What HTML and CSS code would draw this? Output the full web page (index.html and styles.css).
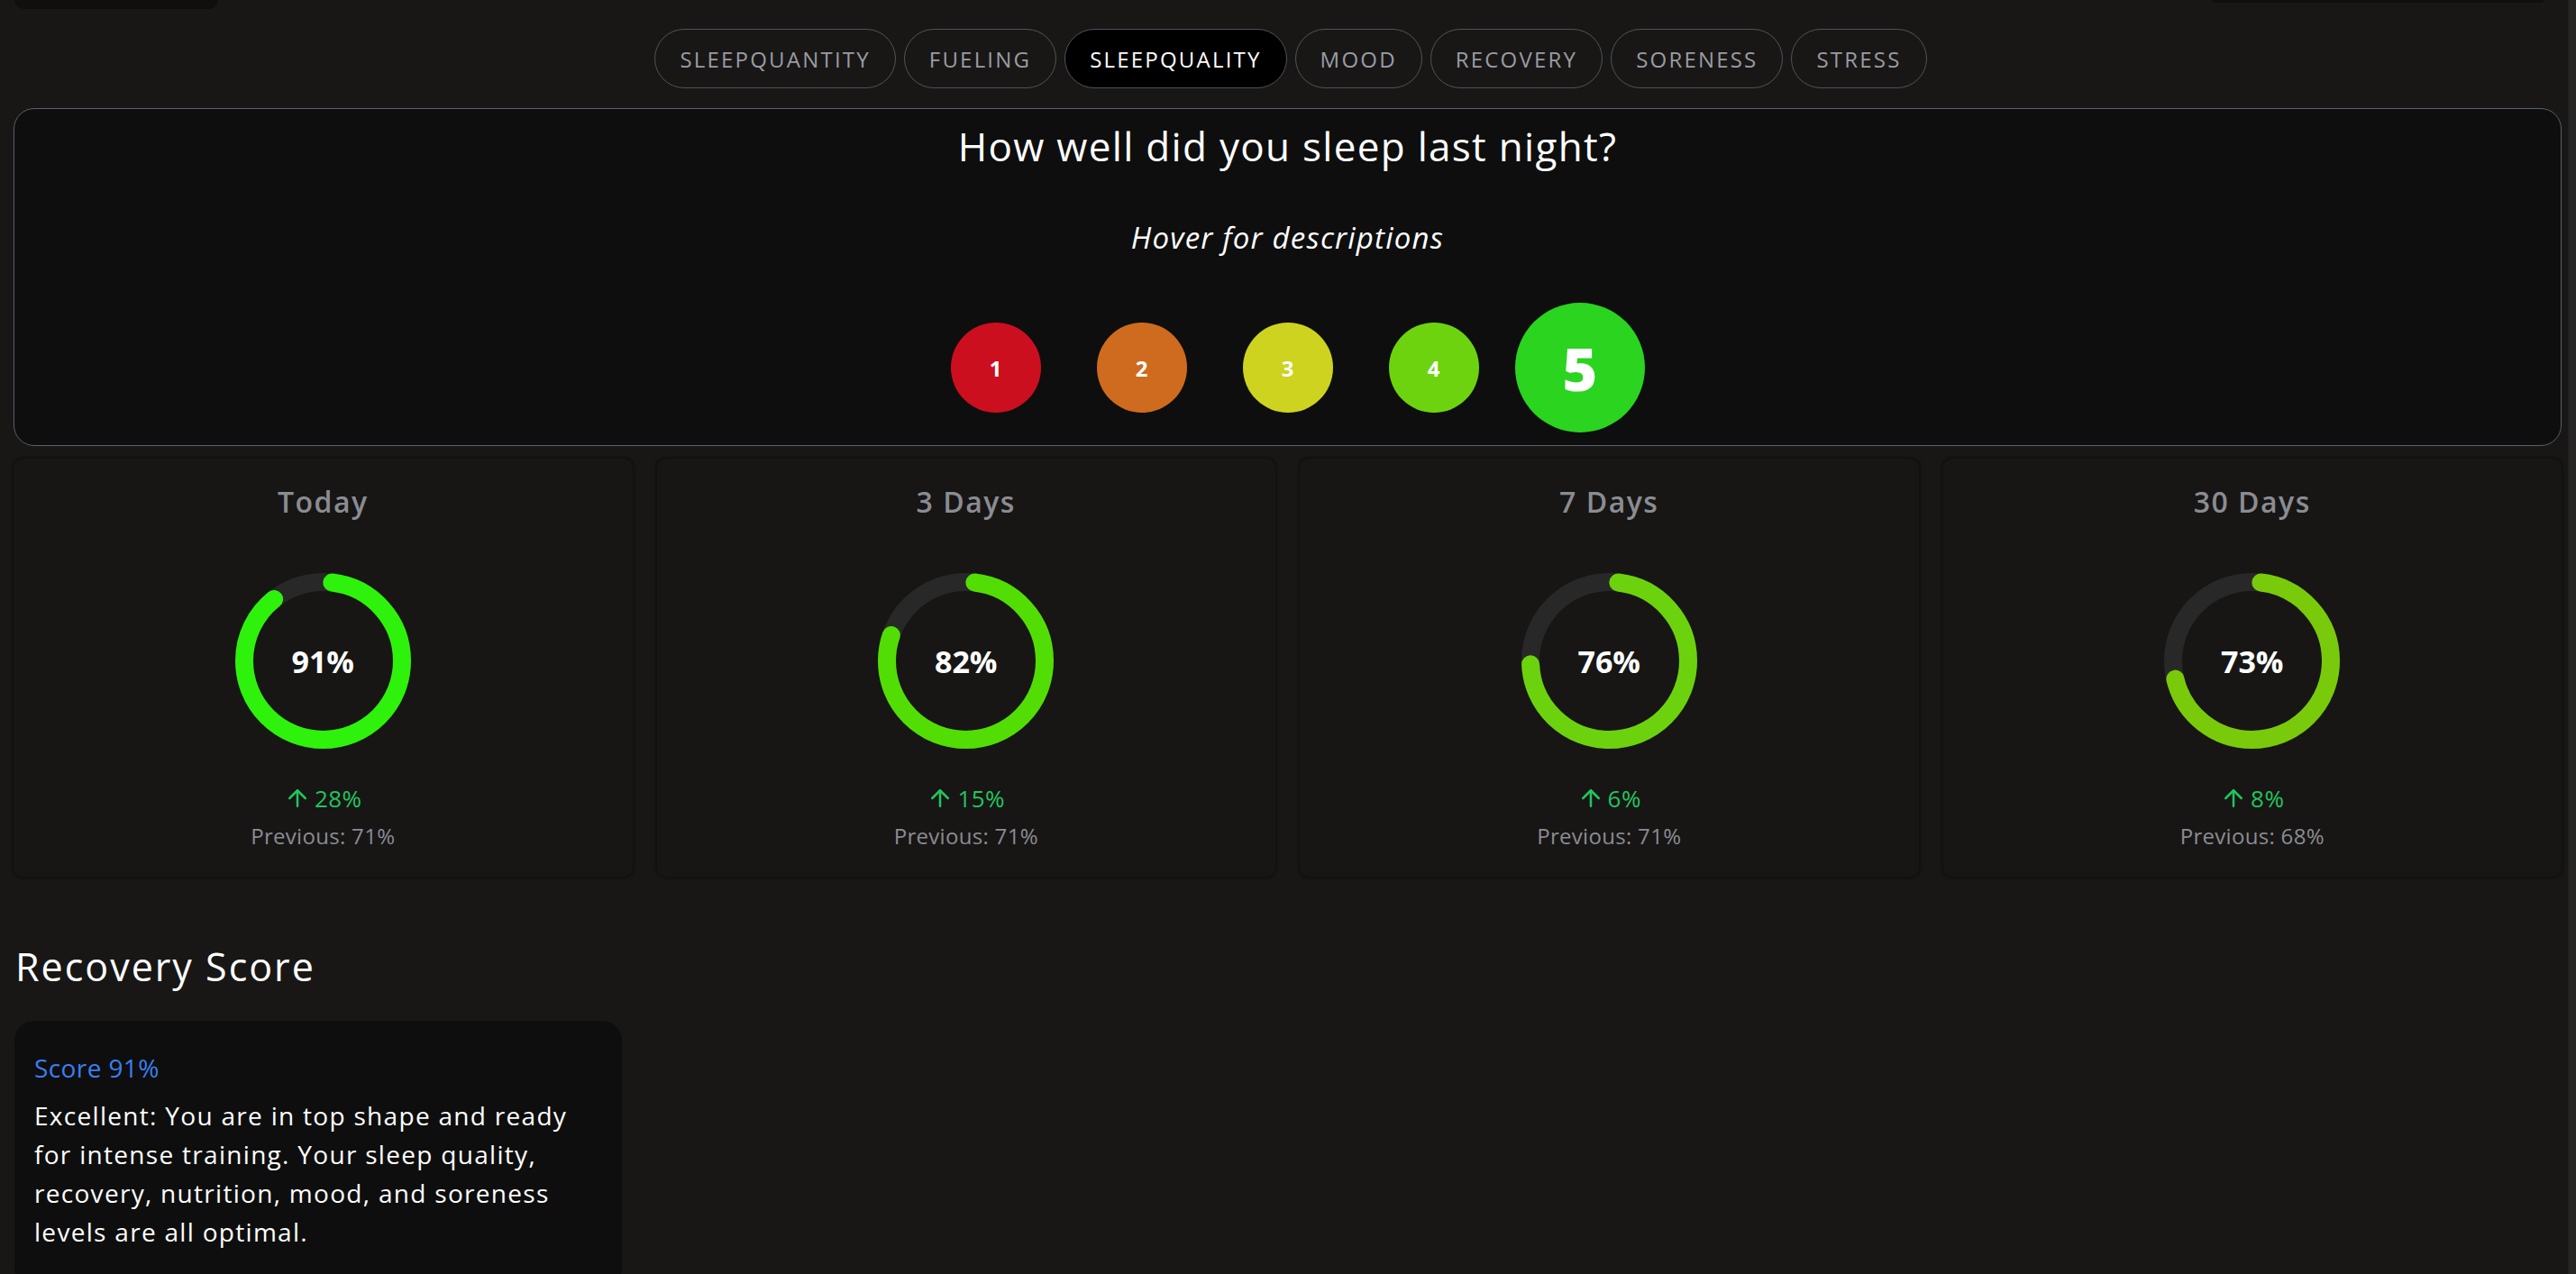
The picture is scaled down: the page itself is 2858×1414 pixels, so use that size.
FILE: index.html
```html
<!DOCTYPE html>
<html lang="en">
<head>
    <meta charset="UTF-8">
    <meta name="viewport" content="width=device-width, initial-scale=1.0">
    <title>Sleep Quality</title>
    <link rel="stylesheet" href="styles.css">
</head>
<body>
    <div class="page">
        <div class="top">
            <div class="top-left"></div>
            <div class="top-right"></div>
        </div>

        <nav class="tabs">
            <button class="tab">SLEEPQUANTITY</button>
            <button class="tab">FUELING</button>
            <button class="tab active">SLEEPQUALITY</button>
            <button class="tab">MOOD</button>
            <button class="tab">RECOVERY</button>
            <button class="tab">SORENESS</button>
            <button class="tab">STRESS</button>
        </nav>

        <section class="question">
            <h2 class="question-title">How well did you sleep last night?</h2>
            <p class="question-hint">Hover for descriptions</p>
            <div class="ratings">
                <button class="rating r1">1</button>
                <button class="rating r2">2</button>
                <button class="rating r3">3</button>
                <button class="rating r4">4</button>
                <button class="rating r5 selected">5</button>
            </div>
        </section>

        <div class="stats">
            <div class="stat">
                <h3 class="stat-title">Today</h3>
                <div class="ring">
                    <svg viewBox="0 0 195 195" width="195" height="195">
                        <circle class="track" cx="97.5" cy="97.5" r="87.5"></circle>
                        <circle class="bar" cx="97.5" cy="97.5" r="87.5" stroke="#2ef20b" stroke-dasharray="480.3 600" stroke-dashoffset="-10" transform="rotate(-90 97.5 97.5)"></circle>
                    </svg>
                    <span class="ring-value">91%</span>
                </div>
                <div class="change">
                    <svg viewBox="0 0 24 24" width="30" height="30"><path d="M12 19V5"/><path d="m5 12 7-7 7 7"/></svg>
                    <span>28%</span>
                </div>
                <div class="previous">Previous: 71%</div>
            </div>
            <div class="stat">
                <h3 class="stat-title">3 Days</h3>
                <div class="ring">
                    <svg viewBox="0 0 195 195" width="195" height="195">
                        <circle class="track" cx="97.5" cy="97.5" r="87.5"></circle>
                        <circle class="bar" cx="97.5" cy="97.5" r="87.5" stroke="#52de05" stroke-dasharray="430.8 600" stroke-dashoffset="-10" transform="rotate(-90 97.5 97.5)"></circle>
                    </svg>
                    <span class="ring-value">82%</span>
                </div>
                <div class="change">
                    <svg viewBox="0 0 24 24" width="30" height="30"><path d="M12 19V5"/><path d="m5 12 7-7 7 7"/></svg>
                    <span>15%</span>
                </div>
                <div class="previous">Previous: 71%</div>
            </div>
            <div class="stat">
                <h3 class="stat-title">7 Days</h3>
                <div class="ring">
                    <svg viewBox="0 0 195 195" width="195" height="195">
                        <circle class="track" cx="97.5" cy="97.5" r="87.5"></circle>
                        <circle class="bar" cx="97.5" cy="97.5" r="87.5" stroke="#6cd20e" stroke-dasharray="397.8 600" stroke-dashoffset="-10" transform="rotate(-90 97.5 97.5)"></circle>
                    </svg>
                    <span class="ring-value">76%</span>
                </div>
                <div class="change">
                    <svg viewBox="0 0 24 24" width="30" height="30"><path d="M12 19V5"/><path d="m5 12 7-7 7 7"/></svg>
                    <span>6%</span>
                </div>
                <div class="previous">Previous: 71%</div>
            </div>
            <div class="stat">
                <h3 class="stat-title">30 Days</h3>
                <div class="ring">
                    <svg viewBox="0 0 195 195" width="195" height="195">
                        <circle class="track" cx="97.5" cy="97.5" r="87.5"></circle>
                        <circle class="bar" cx="97.5" cy="97.5" r="87.5" stroke="#79ca0b" stroke-dasharray="381.3 600" stroke-dashoffset="-10" transform="rotate(-90 97.5 97.5)"></circle>
                    </svg>
                    <span class="ring-value">73%</span>
                </div>
                <div class="change">
                    <svg viewBox="0 0 24 24" width="30" height="30"><path d="M12 19V5"/><path d="m5 12 7-7 7 7"/></svg>
                    <span>8%</span>
                </div>
                <div class="previous">Previous: 68%</div>
            </div>
        </div>

        <h2 class="recovery-title">Recovery Score</h2>
        <div class="recovery">
            <div class="recovery-score">Score 91%</div>
            <p class="recovery-text">Excellent: You are in top shape and ready for intense training. Your sleep quality, recovery, nutrition, mood, and soreness levels are all optimal.</p>
        </div>
    </div>
    <div class="scrollbar"></div>
</body>
</html>
```

FILE: styles.css
```css
html, body {
    height: 100%;
    overflow: hidden;
}
body {
    margin: 0;
    display: flex;
    background-color: #181716;
    color: #ffffff;
    font-family: "Open Sans", "Noto Sans", sans-serif;
}
.page {
    flex: 1;
    padding: 0 7px 0 15px;
}
.scrollbar {
    width: 8px;
    height: 100%;
    background-color: #272727;
    border-left: 1px solid #1f1f1f;
}

/* header remains */
.top {
    display: flex;
    justify-content: space-between;
    align-items: flex-start;
    padding-right: 20px;
}
.top-left {
    width: 226px;
    height: 10px;
    margin-left: 1px;
    background-color: #0f0f0f;
    border-radius: 0 0 10px 10px;
}
.top-right {
    width: 368px;
    height: 3px;
    background-color: #0f0f0f;
    border-radius: 0 0 6px 6px;
}

/* tabs */
.tabs {
    display: flex;
    justify-content: center;
    gap: 9px;
    margin-top: 22px;
    padding-left: 7px;
}
.tab {
    height: 66px;
    padding: 0 27px;
    border: 1px solid #4f535c;
    border-radius: 33px;
    background-color: transparent;
    color: #9a9ca3;
    font-family: inherit;
    font-size: 24px;
    letter-spacing: 2.2px;
    cursor: pointer;
}
.tab.active {
    background-color: #000000;
    color: #ffffff;
}

/* question panel */
.question {
    margin-top: 22px;
    padding: 11px 0 36px;
    border: 1px solid #5a5f6a;
    border-radius: 23px;
    background-color: #0e0e0e;
    text-align: center;
}
.question-title {
    margin: 0;
    font-size: 44px;
    font-weight: 500;
    letter-spacing: 1.3px;
    line-height: 60px;
}
.question-hint {
    margin: 50px 0 0;
    font-size: 33px;
    font-style: italic;
    font-weight: 400;
    letter-spacing: 1.2px;
    line-height: 44px;
}
.ratings {
    display: flex;
    justify-content: center;
    margin-top: 72px;
}
.rating {
    width: 100px;
    height: 100px;
    margin: 0 31px;
    border: none;
    border-radius: 50%;
    color: #ffffff;
    font-family: inherit;
    font-size: 24px;
    font-weight: 700;
    cursor: pointer;
}
.r1 { background-color: #cc0f1f; }
.r2 { background-color: #cf6b1e; }
.r3 { background-color: #ced31f; }
.r4 { background-color: #6dd30f; }
.r5 { background-color: #2bd41f; }
.rating.selected {
    transform: scale(1.44);
    font-size: 46px;
    font-weight: 800;
}

/* stat cards */
.stats {
    display: grid;
    grid-template-columns: repeat(4, 1fr);
    gap: 27px;
    margin-top: 14px;
}
.stat {
    display: flex;
    flex-direction: column;
    align-items: center;
    padding: 26px 0 29px;
    background-color: #171615;
    border-radius: 10px;
    box-shadow: 0 0 3px 2px rgba(0, 0, 0, 0.3);
}
.stat-title {
    margin: 0;
    color: #8b8c92;
    font-size: 32px;
    font-weight: 600;
    letter-spacing: 1.5px;
    line-height: 44px;
}
.ring {
    position: relative;
    width: 195px;
    height: 195px;
    margin-top: 57px;
}
.ring svg {
    display: block;
}
.ring circle {
    fill: none;
    stroke-width: 20;
}
.ring .track {
    stroke: #282828;
}
.ring .bar {
    stroke-linecap: round;
}
.ring-value {
    position: absolute;
    inset: 0;
    display: flex;
    align-items: center;
    justify-content: center;
    font-size: 34px;
    font-weight: 700;
}
.change {
    display: flex;
    align-items: center;
    justify-content: center;
    gap: 4px;
    height: 36px;
    margin-top: 37px;
    color: #22c55e;
    font-size: 26px;
    letter-spacing: 0.5px;
    line-height: 36px;
}
.change svg {
    fill: none;
    stroke: #22c55e;
    stroke-width: 2;
    stroke-linecap: round;
    stroke-linejoin: round;
}
.previous {
    margin-top: 7px;
    color: #8b8c92;
    font-size: 24px;
    letter-spacing: 0.3px;
    line-height: 33px;
}

/* recovery */
.recovery-title {
    margin: 71px 0 0 2px;
    font-size: 43px;
    font-weight: 500;
    letter-spacing: 2px;
    line-height: 57px;
}
.recovery {
    width: 630px;
    margin: 32px 0 0 1px;
    padding: 33px 22px 40px;
    background-color: #0e0e0e;
    border-radius: 22px;
}
.recovery-score {
    color: #3b7ff2;
    font-size: 28px;
    font-weight: 500;
    letter-spacing: 0.4px;
    line-height: 38px;
}
.recovery-text {
    margin: 13px 0 0;
    font-size: 28px;
    letter-spacing: 1.3px;
    line-height: 43px;
}
```
